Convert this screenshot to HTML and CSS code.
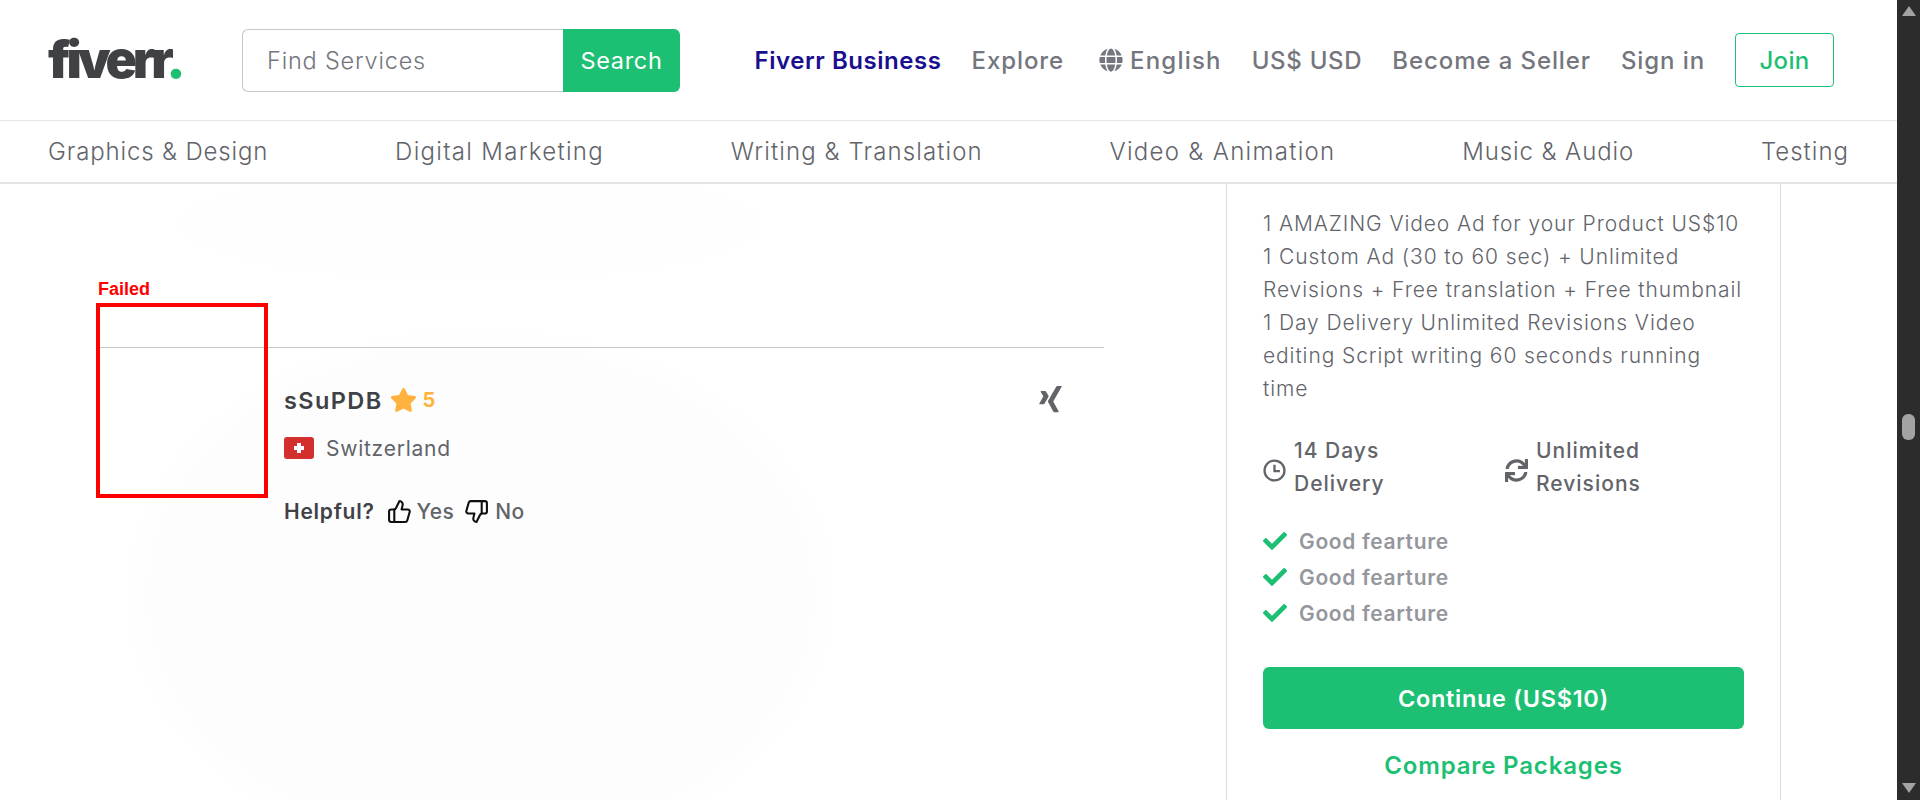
FILE: index.html
```html
<!DOCTYPE html>
<html>
  <head>
    <meta charset="utf-8">
    <title>Fiverr</title>
    <link rel="stylesheet" href="styles.css">
  </head>
  <body>
    <div class="page">
      <header class="topbar">
        <a class="logo">fiverr<span class="logo-dot">.</span></a>
        <form class="search">
          <div class="search-input">Find Services</div>
          <div class="search-btn">Search</div>
        </form>
        <nav class="topnav">
          <a class="biz">Fiverr Business</a>
          <a>Explore</a>
          <a class="lang">
            <svg class="globe" viewBox="0 0 496 512"><path d="M336.5 160C322 70.7 287.8 8 248 8s-74 62.7-88.5 152h177zM152 256c0 22.2 1.2 43.5 3.3 64h185.3c2.1-20.5 3.3-41.8 3.3-64s-1.2-43.5-3.3-64H155.3c-2.1 20.5-3.3 41.8-3.3 64zm324.7-96c-28.6-67.9-86.5-120.4-158-141.6 24.4 33.8 41.2 84.7 50 141.6h108zM177.2 18.4C105.8 39.6 47.8 92.1 19.3 160h108c8.7-56.9 25.5-107.8 49.9-141.6zM487.4 192H372.7c2.1 21 3.3 42.5 3.3 64s-1.2 43-3.3 64h114.6c5.5-20.5 8.6-41.8 8.6-64s-3.1-43.5-8.5-64zM120 256c0-21.5 1.2-43 3.3-64H8.6C3.2 212.5 0 233.8 0 256s3.2 43.5 8.6 64h114.6c-2-21-3.2-42.5-3.2-64zm39.5 96c14.5 89.3 48.7 152 88.5 152s74-62.7 88.5-152h-177zm159.3 141.6c71.4-21.2 129.4-73.7 158-141.6h-108c-8.8 56.9-25.6 107.8-50 141.6zM19.3 352c28.6 67.9 86.5 120.4 158 141.6-24.4-33.8-41.2-84.7-50-141.6h-108z"/></svg>
            English
          </a>
          <a class="currency">US$ USD</a>
          <a>Become a Seller</a>
          <a>Sign in</a>
          <a class="join">Join</a>
        </nav>
      </header>

      <nav class="cats">
        <a>Graphics &amp; Design</a>
        <a>Digital Marketing</a>
        <a>Writing &amp; Translation</a>
        <a>Video &amp; Animation</a>
        <a>Music &amp; Audio</a>
        <a>Testing</a>
      </nav>

      <main class="content">
        <section class="reviews">
          <div class="failed">
            <span class="failed-label">Failed</span>
          </div>
          <hr class="divider">
          <div class="review">
            <div class="review-top">
              <div class="review-name">
                <strong>sSuPDB</strong>
                <svg class="star" viewBox="0 0 576 512"><path d="M259.3 17.8L194 150.2 47.9 171.5c-26.2 3.8-36.7 36.1-17.7 54.6l105.7 103-25 145.5c-4.5 26.3 23.2 46 46.4 33.7L288 439.6l130.7 68.7c23.2 12.2 50.9-7.4 46.4-33.7l-25-145.5 105.7-103c19-18.5 8.5-50.8-17.7-54.6L382 150.2 316.7 17.8c-11.7-23.6-45.6-23.9-57.4 0z"/></svg>
                <span class="score">5</span>
              </div>
              <svg class="xing" viewBox="0 0 384 512"><path d="M162.7 210c-1.8 3.3-25.2 44.4-70.1 123.5-4.9 8.3-10.8 12.5-17.7 12.5H9.8c-7.7 0-12.1-7.5-8.5-14.4l69-121.3c.2 0 .2-.1 0-.3l-43.9-75.6c-4.3-7.8.3-14.1 8.5-14.1H100c7.3 0 13.3 4.1 18 12.2l44.7 77.5zM382.6 46.1l-144 253v.3L330.2 466c3.9 7.1.2 14.1-8.5 14.1h-65.2c-7.6 0-13.6-4-18-12.2l-92.4-168.5c3.3-5.8 51.5-90.8 144.8-255.2 4.6-8.1 10.4-12.2 17.5-12.2h65.7c8 0 12.3 6.7 8.5 14.1z"/></svg>
            </div>
            <div class="review-country">
              <svg class="flag" viewBox="0 0 30 22"><rect width="30" height="22" rx="3" fill="#d32f2f"/><path d="M13 6h4v3h3v4h-3v3h-4v-3h-3V9h3z" fill="#fff"/></svg>
              <span>Switzerland</span>
            </div>
            <div class="helpful">
              <strong>Helpful?</strong>
              <svg class="thumb thumb-up" viewBox="0 0 24 24"><path d="M7 10v12"/><path d="M15 5.88 14 10h5.83a2 2 0 0 1 1.92 2.56l-2.33 8A2 2 0 0 1 17.5 22H4a2 2 0 0 1-2-2v-8a2 2 0 0 1 2-2h2.76a2 2 0 0 0 1.79-1.11L12 2a3.13 3.13 0 0 1 3 3.88Z"/></svg>
              <span>Yes</span>
              <svg class="thumb thumb-down" viewBox="0 0 24 24"><path d="M17 14V2"/><path d="M9 18.12 10 14H4.17a2 2 0 0 1-1.92-2.56l2.33-8A2 2 0 0 1 6.5 2H20a2 2 0 0 1 2 2v8a2 2 0 0 1-2 2h-2.76a2 2 0 0 0-1.79 1.11L12 22a3.13 3.13 0 0 1-3-3.88Z"/></svg>
              <span>No</span>
            </div>
          </div>
        </section>

        <aside class="package">
          <p class="package-desc">1 AMAZING Video Ad for your Product US$10<br>1 Custom Ad (30 to 60 sec) + Unlimited<br>Revisions + Free translation + Free thumbnail<br>1 Day Delivery Unlimited Revisions Video<br>editing Script writing 60 seconds running<br>time</p>
          <div class="package-meta">
            <div class="meta-item">
              <svg class="meta-icon clock" viewBox="0 0 24 24"><circle cx="12" cy="12" r="10.4"/><path d="M12 6v6.6h5.6"/></svg>
              <span>14 Days<br>Delivery</span>
            </div>
            <div class="meta-item">
              <svg class="meta-icon sync" viewBox="0 0 512 512"><path d="M440.65 12.57l4 82.77A247.16 247.16 0 0 0 255.83 8C134.73 8 33.91 94.92 12.29 209.82A12 12 0 0 0 24.09 224h49.05a12 12 0 0 0 11.67-9.26 175.91 175.91 0 0 1 317-56.94l-101.46-4.86a12 12 0 0 0-12.57 12v47.41a12 12 0 0 0 12 12H500a12 12 0 0 0 12-12V12a12 12 0 0 0-12-12h-47.37a12 12 0 0 0-11.98 12.57zM255.83 432a175.61 175.61 0 0 1-146-77.8l101.8 4.87a12 12 0 0 0 12.57-12v-47.4a12 12 0 0 0-12-12H12a12 12 0 0 0-12 12V500a12 12 0 0 0 12 12h47.35a12 12 0 0 0 12-12.6l-4.15-82.57A247.17 247.17 0 0 0 255.83 504c121.11 0 221.93-86.92 243.55-201.82a12 12 0 0 0-11.8-14.18h-49.05a12 12 0 0 0-11.67 9.26A175.86 175.86 0 0 1 255.83 432z"/></svg>
              <span>Unlimited<br>Revisions</span>
            </div>
          </div>
          <ul class="features">
            <li><svg class="check" viewBox="0 0 512 512"><path d="M173.898 439.404l-166.4-166.4c-9.997-9.997-9.997-26.206 0-36.204l36.203-36.204c9.997-9.998 26.207-9.998 36.204 0L192 312.69 432.095 72.596c9.997-9.997 26.207-9.997 36.204 0l36.203 36.204c9.997 9.997 9.997 26.206 0 36.204l-294.4 294.401c-9.998 9.997-26.207 9.997-36.204-.001z"/></svg>Good fearture</li>
            <li><svg class="check" viewBox="0 0 512 512"><path d="M173.898 439.404l-166.4-166.4c-9.997-9.997-9.997-26.206 0-36.204l36.203-36.204c9.997-9.998 26.207-9.998 36.204 0L192 312.69 432.095 72.596c9.997-9.997 26.207-9.997 36.204 0l36.203 36.204c9.997 9.997 9.997 26.206 0 36.204l-294.4 294.401c-9.998 9.997-26.207 9.997-36.204-.001z"/></svg>Good fearture</li>
            <li><svg class="check" viewBox="0 0 512 512"><path d="M173.898 439.404l-166.4-166.4c-9.997-9.997-9.997-26.206 0-36.204l36.203-36.204c9.997-9.998 26.207-9.998 36.204 0L192 312.69 432.095 72.596c9.997-9.997 26.207-9.997 36.204 0l36.203 36.204c9.997 9.997 9.997 26.206 0 36.204l-294.4 294.401c-9.998 9.997-26.207 9.997-36.204-.001z"/></svg>Good fearture</li>
          </ul>
          <a class="continue">Continue (US$10)</a>
          <a class="compare">Compare Packages</a>
        </aside>
      </main>
    </div>

    <div class="scrollbar">
      <div class="arrow-up"></div>
      <div class="thumb-track"><div class="scroll-thumb"></div></div>
      <div class="arrow-down"></div>
    </div>
  </body>
</html>
```

FILE: styles.css
```css
*{
  margin: 0;
  padding: 0;
  box-sizing: border-box;
}
html, body{
  height: 100%;
  overflow: hidden;
}
body{
  display: flex;
  background-color: #fff;
  font-family: Inter, "Open Sans", sans-serif;
  color: #62646a;
}
.page{
  flex: 1;
  display: flex;
  flex-direction: column;
  min-width: 0;
}

/* header */
.topbar{
  height: 121px;
  flex: none;
  display: flex;
  align-items: center;
  padding: 0 63px 0 48px;
  border-bottom: 1px solid #e4e5e7;
}
.logo{
  width: 194px;
  flex: none;
  font-size: 52px;
  line-height: 1;
  font-weight: 900;
  letter-spacing: -4.2px;
  color: #404145;
}
.logo-dot{
  color: #1dbf73;
}
.search{
  width: 438px;
  height: 63px;
  flex: none;
  display: flex;
}
.search-input{
  flex: 1;
  display: flex;
  align-items: center;
  padding-left: 24px;
  border: 1px solid #c5c6c9;
  border-right: 0;
  border-radius: 6px 0 0 6px;
  font-size: 23.5px;
  font-weight: 300;
  letter-spacing: .8px;
  color: #74767e;
}
.search-btn{
  width: 117px;
  display: flex;
  align-items: center;
  justify-content: center;
  background-color: #1dbf73;
  border-radius: 0 6px 6px 0;
  font-size: 23.5px;
  font-weight: 400;
  letter-spacing: .7px;
  color: #fff;
}
.topnav{
  flex: 1;
  display: flex;
  align-items: center;
  justify-content: flex-end;
  gap: 30px;
  font-size: 24px;
  font-weight: 500;
  letter-spacing: .9px;
  color: #74767e;
}
.topnav a{
  white-space: nowrap;
}
.topnav .biz{
  color: #1a0f8f;
  font-weight: 600;
  letter-spacing: .55px;
}
.topnav .currency{
  letter-spacing: .7px;
}
.topnav .lang{
  display: flex;
  align-items: center;
  gap: 7px;
  margin-left: 5px;
  letter-spacing: 1.2px;
}
.globe{
  width: 24px;
  height: 24px;
  fill: #74767e;
}
.topnav .join{
  width: 99px;
  height: 54px;
  display: flex;
  align-items: center;
  justify-content: center;
  border: 1px solid #1dbf73;
  border-radius: 4px;
  color: #1dbf73;
  letter-spacing: .3px;
}

/* categories */
.cats{
  height: 63px;
  flex: none;
  display: flex;
  align-items: center;
  justify-content: space-between;
  padding: 0 48px 1px 48px;
  border-bottom: 2px solid #e4e5e7;
  font-size: 24px;
  font-weight: 300;
  letter-spacing: 1px;
  white-space: nowrap;
}
.cats a:nth-child(1){
  letter-spacing: .85px;
}
.cats a:nth-child(2), .cats a:nth-child(4){
  letter-spacing: 1.3px;
}
.cats a:nth-child(3){
  letter-spacing: 1.1px;
}
.cats a:nth-child(5){
  letter-spacing: .9px;
}

.content{
  flex: 1;
  display: flex;
  min-height: 0;
}

/* left column */
.reviews{
  position: relative;
  width: 1226px;
  flex: none;
  padding: 163px 122px 0 100px;
  background:
    radial-gradient(ellipse 300px 60px at 470px 40px, #fefefe 90%, transparent),
    radial-gradient(ellipse 360px 270px at 480px 410px, #fdfdfd 90%, #fff);
}
.failed{
  position: absolute;
  left: 96px;
  top: 119px;
  width: 172px;
  height: 195px;
  border: 4px solid #f00;
}
.failed-label{
  position: absolute;
  left: -2px;
  bottom: 100%;
  margin-bottom: 9px;
  font-family: "Liberation Sans", Arial, sans-serif;
  font-size: 18px;
  font-weight: 700;
  line-height: 18px;
  color: #f00;
}
.divider{
  border: 0;
  border-top: 1px solid #c5c6c9;
}
.review{
  padding: 36px 0 0 184px;
}
.review-top{
  display: flex;
  justify-content: space-between;
  padding-right: 42px;
}
.review-name{
  display: flex;
  align-items: center;
  height: 32px;
  font-size: 23.5px;
}
.review-name strong{
  font-weight: 600;
  color: #404145;
  letter-spacing: 1.4px;
}
.star{
  width: 27px;
  height: 24px;
  margin: 0 6px 0 7px;
  fill: #ffb33e;
}
.score{
  font-size: 20px;
  font-weight: 700;
  color: #ffb33e;
}
.xing{
  width: 23px;
  height: 30px;
  fill: #62646a;
}
.review-country{
  display: flex;
  align-items: center;
  gap: 12px;
  height: 30px;
  margin-top: 17px;
  font-size: 21px;
  letter-spacing: .75px;
}
.flag{
  width: 30px;
  height: 22px;
}
.helpful{
  display: flex;
  align-items: center;
  height: 30px;
  margin-top: 33px;
  font-size: 21px;
  font-weight: 500;
  letter-spacing: .4px;
}
.helpful strong{
  font-weight: 600;
  color: #404145;
  letter-spacing: .75px;
  margin-right: 12px;
}
.thumb{
  width: 25px;
  height: 25px;
  fill: none;
  stroke: #0e0e0e;
  stroke-width: 2;
  stroke-linejoin: round;
  stroke-linecap: round;
}
.thumb-up{
  margin-right: 5px;
}
.thumb-down{
  margin: 0 6px 0 10px;
}

/* right column */
.package{
  width: 555px;
  flex: none;
  padding: 23px 36px 0 36px;
  border-left: 1px solid #dadbdd;
  border-right: 1px solid #dadbdd;
}
.package-desc{
  font-size: 21px;
  font-weight: 300;
  line-height: 33px;
  letter-spacing: .9px;
  white-space: nowrap;
}
.package-meta{
  display: flex;
  margin-top: 29px;
  font-size: 21px;
  font-weight: 500;
  line-height: 33px;
  letter-spacing: 1px;
}
.meta-item{
  display: flex;
  align-items: center;
  flex: none;
  width: 242px;
  gap: 8px;
}
.meta-icon{
  flex: none;
  width: 23px;
  height: 23px;
  margin-top: 6px;
}
.clock{
  fill: none;
  stroke: #62646a;
  stroke-width: 2.4;
}
.sync{
  fill: #62646a;
}
.features{
  list-style: none;
  margin-top: 23px;
  font-size: 21px;
  font-weight: 600;
  letter-spacing: .65px;
  color: #95979d;
}
.features li{
  display: flex;
  align-items: center;
  gap: 12px;
  height: 36px;
}
.check{
  flex: none;
  width: 24px;
  height: 24px;
  fill: #1dbf73;
}
.continue{
  display: flex;
  align-items: center;
  justify-content: center;
  width: 481px;
  height: 62px;
  margin-top: 36px;
  background-color: #1dbf73;
  border-radius: 6px;
  font-size: 23.5px;
  font-weight: 600;
  letter-spacing: .7px;
  color: #fff;
}
.compare{
  display: block;
  width: 481px;
  margin-top: 22px;
  text-align: center;
  font-size: 24px;
  font-weight: 600;
  letter-spacing: .85px;
  color: #1dbf73;
}

/* window scrollbar */
.scrollbar{
  width: 23px;
  flex: none;
  display: flex;
  flex-direction: column;
  align-items: center;
  background-color: #2c2c2c;
  padding: 6px 0 7px;
}
.arrow-up, .arrow-down{
  flex: none;
  width: 0;
  height: 0;
  border-left: 7px solid transparent;
  border-right: 7px solid transparent;
}
.arrow-up{
  border-bottom: 10px solid #a3a3a3;
}
.arrow-down{
  border-top: 10px solid #a3a3a3;
}
.thumb-track{
  flex: 1;
  padding-top: 398px;
}
.scroll-thumb{
  width: 13px;
  height: 26px;
  border-radius: 6px;
  background-color: #a3a3a3;
}
```
